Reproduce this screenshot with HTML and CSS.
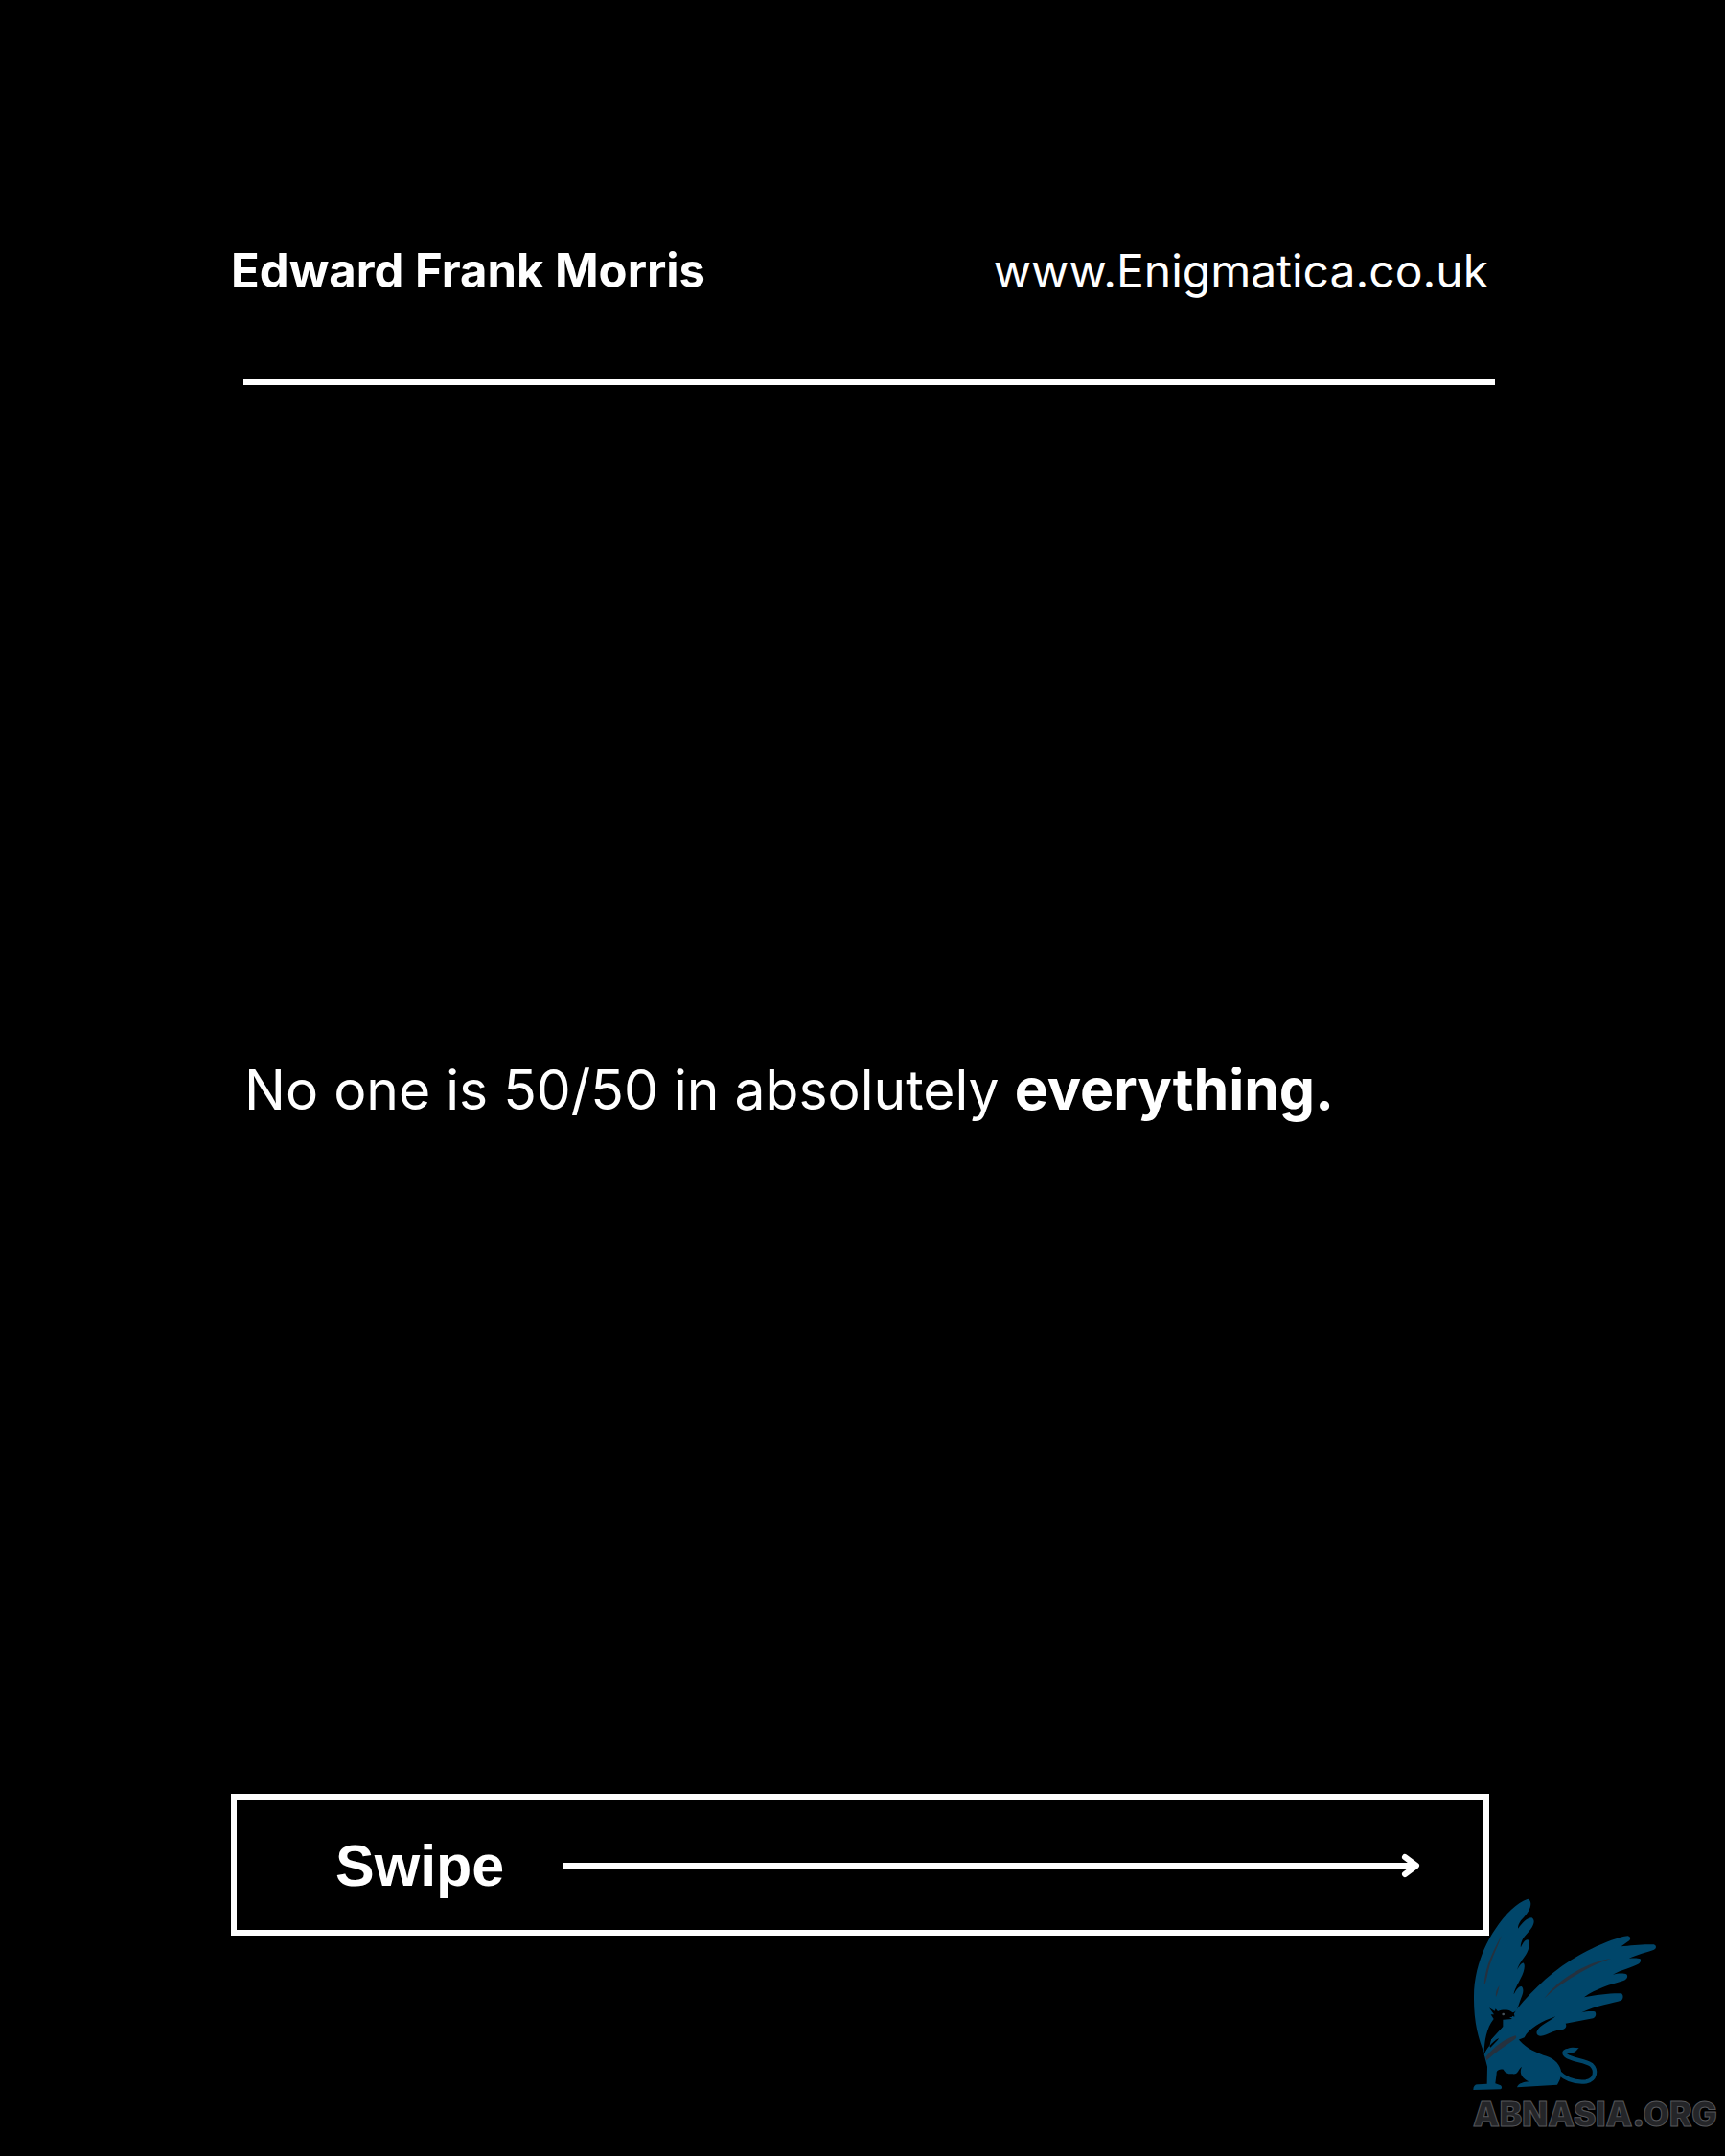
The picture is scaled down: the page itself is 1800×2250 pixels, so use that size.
FILE: index.html
```html
<!DOCTYPE html>
<html lang="en">
<head>
<meta charset="utf-8">
<meta name="viewport" content="width=device-width, initial-scale=1">
<title>Edward Frank Morris</title>
<link rel="stylesheet" href="styles.css">
</head>
<body>
<div class="slide">
  <header class="masthead">
    <strong class="author">Edward Frank Morris</strong>
    <a class="site" href="https://www.enigmatica.co.uk">www.Enigmatica.co.uk</a>
  </header>
  <hr class="rule">
  <main class="message">
    <p class="quote">No one is 50/50 in absolutely <strong>everything.</strong></p>
  </main>
  <button class="swipe" type="button">
    <span>Swipe</span>
    <span class="arrow">
      <span class="shaft"></span>
      <svg class="head" viewBox="0 0 20 26" aria-hidden="true"><path d="M4 4 L16 13 L4 22 M0 13 H15"/></svg>
    </span>
  </button>
  <div class="watermark">
    <svg class="griffin" viewBox="50 30 582 606" aria-hidden="true">
      <!-- far wing -->
      <path class="blue" d="M222 35 C231 38 233 50 229 62 C224 78 211 91 200 103 C193 114 190 123 191 128 C204 111 219 94 234 94 C243 99 243 110 235 124 C223 143 207 154 202 170 C199 178 199 185 200 187 C204 177 213 161 222 163 C231 168 227 187 219 204 C209 222 195 235 188 258 C193 248 203 233 209 236 C215 245 209 266 200 283 C190 303 178 323 178 334 C184 322 193 307 202 309 C211 316 207 332 200 347 L187 385 L140 410 L100 470 L85 517 C67 473 52 420 53 340 C53 260 84 180 121 128 C151 83 188 46 222 35 Z"/>
      <!-- near wing -->
      <path class="blue" d="M187 381 C240 315 310 251 385 210 C440 180 500 155 535 151 C544 153 545 162 537 167 C531 172 520 178 514 184 C544 180 590 176 616 178 C625 181 625 190 617 194 C596 202 562 209 538 222 C550 220 566 220 574 223 C577 229 574 235 567 239 C547 250 515 256 488 272 C503 268 523 267 532 272 C536 280 531 288 519 292 C481 303 435 316 398 343 C435 336 480 330 514 331 C522 335 521 348 514 353 C490 362 435 367 390 391 C403 387 421 386 432 388 C437 395 435 405 426 409 L340 425 C345 434 340 442 327 445 C306 446 291 457 270 463 C256 467 247 460 250 450 C260 429 287 421 309 403 C267 417 224 441 211 469 L192 476 L140 480 L140 405 L172 405 Z"/>
      <!-- body and legs -->
      <path class="blue" d="M143 434 L190 470 C207 496 237 511 270 524 C298 530 320 548 325 570 C330 588 321 604 314 617 L188 625 C193 612 208 609 225 607 C208 598 192 584 203 560 C190 570 193 585 174 583 C163 583 153 583 145 569 C135 568 123 571 124 582 L120 613 L137 619 C142 624 141 629 137 631 L51 633 C51 621 57 615 67 616 L94 614 L95 560 L85 522 L107 475 Z"/>
      <path class="tail" d="M318 578 C344 603 375 610 404 607 C435 601 438 571 420 554 C401 540 360 540 341 525 C331 515 340 508 354 510"/>
      <path class="blue" d="M339 514 C344 504 352 500 362 500 L382 502 C373 509 371 519 354 516 Z"/>
      <!-- head and neck -->
      <path class="dark" d="M101 376 L118 386 L121 379 L128 387 C142 381 160 382 169 387 C178 391 181 398 180 404 C171 399 164 400 161 403 L173 411 L144 413 L144 435 L107 475 L103 493 L85 517 C86 480 92 440 115 411 L106 397 L116 397 Z"/>
      <circle class="eye" cx="145" cy="396" r="4"/>
      <path class="dark" d="M102 495 C113 482 122 476 131 471 L128 476 L105 500 Z"/>
      <!-- feather shading -->
      <path class="shade" d="M139 150 C118 190 89 240 85 304 C93 296 94 272 103 242 C112 213 130 181 139 150 Z"/>
      <path class="shade" d="M133 306 C126 316 120 326 122 342 C128 332 130 319 133 306 Z"/>
      <path class="shade" d="M482 222 C413 232 320 282 274 346 C308 314 344 290 384 267 C417 249 447 232 482 222 Z"/>
      <path class="shade" d="M90 530 C119 495 149 474 183 463 C187 466 187 470 182 474 C151 495 121 514 93 541 Z"/>
    </svg>
    <span class="brand">ABNASIA.ORG</span>
  </div>
</div>
</body>
</html>
```

FILE: styles.css
```css
* {
  box-sizing: border-box;
}

body {
  margin: 0;
  background: #000;
  color: #fff;
  font-family: Inter, "Liberation Sans", sans-serif;
}

.slide {
  position: relative;
  display: flex;
  flex-direction: column;
  min-height: 100vh;
  padding: 254px 240px 230px;
}

.masthead {
  display: flex;
  flex-wrap: wrap;
  justify-content: space-between;
  gap: 16px;
  padding: 0 7px 84px 1px;
  font-size: 48px;
  line-height: 58px;
}

.author {
  font-size: 49px;
  font-weight: 700;
}

.site {
  color: inherit;
  font-weight: 400;
  text-decoration: none;
}

.rule {
  width: auto;
  height: 6px;
  margin: 0 0 0 14px;
  border: 0;
  background: #fff;
}

.message {
  display: flex;
  flex: 1;
  align-items: center;
  padding-left: 15px;
}

.quote {
  margin: 0;
  font-size: 57px;
  line-height: 72px;
}

.quote strong {
  font-size: 59px;
}

.swipe {
  display: flex;
  align-items: center;
  gap: 62px;
  height: 148px;
  margin: 0 6px 0 1px;
  padding: 2px 66px 0 103px;
  border: 6px solid #fff;
  background: transparent;
  color: inherit;
  font: 700 61px/72px "Liberation Sans", sans-serif;
  cursor: pointer;
}

.arrow {
  display: flex;
  flex: 1;
  align-items: center;
}

.shaft {
  flex: 1;
  height: 6px;
  margin-right: -8px;
  background: #fff;
}

.head {
  width: 20px;
  height: 26px;
  fill: none;
  stroke: #fff;
  stroke-width: 6;
  stroke-linecap: round;
  stroke-linejoin: round;
}

.watermark {
  position: absolute;
  right: 6px;
  bottom: 27px;
  display: flex;
  flex-direction: column;
  gap: 7px;
  width: 257px;
}

.griffin {
  width: 194px;
  height: 202px;
}

.blue {
  fill: #00466a;
}

.tail {
  fill: none;
  stroke: #00466a;
  stroke-width: 13;
  stroke-linecap: round;
}

.dark {
  fill: #000;
}

.eye {
  fill: #47525a;
}

.shade {
  fill: #25313e;
}

.brand {
  color: #242528;
  font-size: 35px;
  font-weight: 900;
  line-height: 34px;
  -webkit-text-stroke: 1px #55565a;
}
```
